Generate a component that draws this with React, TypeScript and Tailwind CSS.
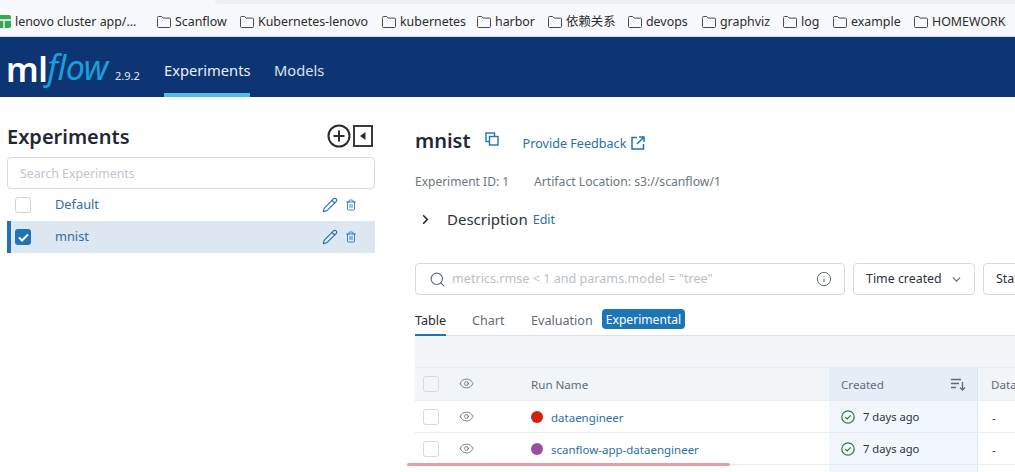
import React from 'react';
import { ChevronDown, ChevronRight, Eye, Info, Pencil, Search, Trash2 } from 'lucide-react';

const bookmarks = [
  { name: 'Scanflow', width: 'w-[83px]' },
  { name: 'Kubernetes-lenovo', width: 'w-[142px]' },
  { name: 'kubernetes', width: 'w-[95px]' },
  { name: 'harbor', width: 'w-[71px]' },
  { name: '依赖关系', width: 'w-[80px]' },
  { name: 'devops', width: 'w-[74px]' },
  { name: 'graphviz', width: 'w-[81px]' },
  { name: 'log', width: 'w-[50px]' },
  { name: 'example', width: 'w-[81px]' },
  { name: 'HOMEWORK', width: 'w-[100px]' },
];

function FolderIcon() {
  return (
    <svg width="16" height="14" viewBox="0 0 16 14" fill="none" stroke="#4b4b4b" strokeWidth="1" className="shrink-0">
      <path d="M1.5 3.5V2.5a1 1 0 0 1 1-1h3.2l1.4 1.6h6.4a1 1 0 0 1 1 1v7.4a1 1 0 0 1-1 1H2.5a1 1 0 0 1-1-1z" />
    </svg>
  );
}

function SheetIcon() {
  return (
    <svg width="11" height="13" viewBox="0 0 11 13" className="shrink-0 mr-[4px]">
      <path d="M0 0h9a2 2 0 0 1 2 2v9a2 2 0 0 1-2 2H0z" fill="#34a853" />
      <path d="M0 5h11M4 5v8" stroke="white" strokeWidth="1.3" fill="none" />
    </svg>
  );
}

function BookmarkBar() {
  return (
    <div className="h-[37px] shrink-0 bg-[#f7f8fc] border-b border-[#d5d9e2]">
      <div className="h-[4px] ml-[215px] bg-[#efeff3] rounded-bl-md" />
      <div className="h-[32px] flex items-center pt-[4px] text-[12.4px] text-[#2b2b2b] whitespace-nowrap">
        <div className="w-[156px] flex items-center shrink-0">
          <SheetIcon />
          <span>lenovo cluster app/...</span>
        </div>
        {bookmarks.map((b) => (
          <div key={b.name} className={`${b.width} flex items-center gap-[3px] shrink-0`}>
            <FolderIcon />
            <span>{b.name}</span>
          </div>
        ))}
      </div>
    </div>
  );
}

function TopNav() {
  return (
    <div className="h-[60px] shrink-0 bg-[#0e3573] flex text-white">
      <div className="w-[164px] flex items-center pl-[6px] pt-[6px] shrink-0">
        <span className="text-[34px] font-semibold leading-none tracking-[-0.5px] mt-[-3px]">ml</span>
        <span className="text-[34px] italic font-normal leading-none text-[#1a9fd8] mt-[-6px] tracking-[-0.5px]">flow</span>
        <span className="text-[11px] ml-[7px] mt-[12px] text-[#e4ebf3]">2.9.2</span>
      </div>
      <div className="w-[86px] h-full flex flex-col shrink-0 text-[14.7px] text-[#e7eef6]">
        <div className="flex-1 flex items-center pt-[10px]">Experiments</div>
        <div className="h-[4px] bg-[#4fbfe8]" />
      </div>
      <div className="ml-[24px] flex items-center pt-[10px] h-[60px] pb-[4px] text-[14.7px] text-[#d8e3ef]">Models</div>
    </div>
  );
}

function ExperimentRow({ name, selected }: { name: string; selected?: boolean }) {
  return (
    <div
      className={`h-[32px] flex items-center pr-[18px] text-[12.8px] text-[#2d6ea8] ${
        selected ? 'bg-[#dce7f2] border-l-[4px] border-[#2272b4] pl-[4px]' : 'pl-[8px]'
      }`}
    >
      {selected ? (
        <div className="w-[16px] h-[16px] rounded-[3px] bg-[#2272b4] flex items-center justify-center">
          <svg width="11" height="9" viewBox="0 0 11 9" fill="none" stroke="white" strokeWidth="2">
            <path d="M1 4.5 L4 7.5 L10 1.5" />
          </svg>
        </div>
      ) : (
        <div className="w-[16px] h-[16px] rounded-[3px] border border-[#ccd3da] bg-white" />
      )}
      <span className="ml-[24px] flex-1">{name}</span>
      <Pencil size={16} strokeWidth={1.7} className="text-[#2272b4]" />
      <Trash2 size={12} strokeWidth={1.7} className="ml-[7px] text-[#2272b4]" />
    </div>
  );
}

function Sidebar() {
  return (
    <div className="w-[375px] shrink-0 pl-[7px] pt-[23px]">
      <div className="h-[36px] flex items-center">
        <span className="flex-1 text-[20px] font-semibold text-[#1f2933] mb-[2px]">Experiments</span>
        <svg width="24" height="24" viewBox="0 0 24 24" fill="none" stroke="#2b2b2b" strokeWidth="2" className="mb-[5px]">
          <circle cx="12" cy="12" r="10.5" />
          <path d="M12 6.5v11M6.5 12h11" />
        </svg>
        <svg width="20" height="22" viewBox="0 0 20 22" className="ml-[2px] mr-[2px] mb-[5px]">
          <rect x="1" y="1" width="18" height="20" fill="none" stroke="#3a3a3a" strokeWidth="2" />
          <path d="M12.5 7v8L7 11z" fill="#2b2b2b" />
        </svg>
      </div>
      <div className="mt-[1px] h-[32px] border border-[#d4dae0] rounded-[4px] flex items-center pl-[12px] pt-[2px] text-[12.3px] text-[#c0c6cd]">
        Search Experiments
      </div>
      <ExperimentRow name="Default" />
      <ExperimentRow name="mnist" selected />
    </div>
  );
}

function CopyIcon() {
  return (
    <svg width="14" height="14" viewBox="0 0 14 14" fill="none" stroke="#2272b4" strokeWidth="1.4">
      <rect x="1" y="1" width="8.5" height="8.5" />
      <rect x="4.5" y="4.5" width="8.5" height="8.5" fill="white" />
    </svg>
  );
}

function ExternalIcon() {
  return (
    <svg width="14" height="14" viewBox="0 0 14 14" fill="none" stroke="#2272b4" strokeWidth="1.5">
      <path d="M6 1.5H1v11.5h11.5V8M8 1h5v5M13 1L6 8" />
    </svg>
  );
}

function Header() {
  return (
    <div>
      <div className="h-[30px] flex items-center">
        <span className="text-[20px] font-semibold text-[#1f2933]">mnist</span>
        <span className="ml-[14px] mb-[4px]">
          <CopyIcon />
        </span>
        <span className="ml-[24px] text-[12.6px] text-[#2d6ea8] mt-[6px]">Provide Feedback</span>
        <span className="ml-[5px] mt-[4px]">
          <ExternalIcon />
        </span>
      </div>
      <div className="mt-[17px] flex text-[12px] text-[#6b7680]">
        <span className="w-[119px]">Experiment ID: 1</span>
        <span className="text-[12.2px]">Artifact Location: s3://scanflow/1</span>
      </div>
      <div className="mt-[16px] h-[24px] flex items-center">
        <ChevronRight size={15} strokeWidth={2.6} className="text-[#1f2933] ml-[3px]" />
        <span className="ml-[14px] text-[15px] text-[#2b333b]">Description</span>
        <span className="ml-[5px] mt-[2px] text-[12.5px] text-[#2d6ea8]">Edit</span>
      </div>
    </div>
  );
}

function Toolbar() {
  return (
    <div className="mt-[32px] flex gap-[8px] whitespace-nowrap">
      <div className="w-[430px] h-[32px] shrink-0 border border-[#d4dae0] rounded-[4px] flex items-center pl-[13px] pr-[12px]">
        <Search size={17} strokeWidth={1.6} className="text-[#5f6b76] shrink-0" />
        <span className="ml-[6px] flex-1 pt-[1px] text-[12.6px] text-[#b9bfc5]">metrics.rmse &lt; 1 and params.model = "tree"</span>
        <Info size={16} strokeWidth={1.5} className="text-[#5f6b76]" />
      </div>
      <div className="w-[122px] h-[32px] shrink-0 border border-[#d4dae0] rounded-[4px] flex items-center pl-[12px] pr-[11px] text-[12.4px] text-[#2b333b]">
        <span className="flex-1 pt-[1px]">Time created</span>
        <ChevronDown size={13} strokeWidth={2.4} className="text-[#5f6b76]" />
      </div>
      <div className="w-[100px] h-[32px] shrink-0 border border-[#d4dae0] rounded-l-[4px] flex items-center pl-[12px] pt-[1px] text-[12.4px] text-[#2b333b]">
        State
      </div>
    </div>
  );
}

function Tabs() {
  return (
    <div className="mt-[13px] h-[28px] flex items-stretch border-b border-[#dbe1e7] text-[12.6px] whitespace-nowrap">
      <div className="w-[31px] mr-[26px] text-[#1f2933] border-b-[2px] border-[#2272b4] mb-[-1px] leading-[25px]">Table</div>
      <div className="w-[33px] mr-[26px] text-[#5f6b76] leading-[25px]">Chart</div>
      <div className="w-[63px] mr-[8px] text-[#5f6b76] leading-[25px]">Evaluation</div>
      <div className="h-[20px] mt-[1px] w-[83px] bg-[#1c76b5] rounded-[4px] text-white text-center text-[12.1px] leading-[21px]">Experimental</div>
    </div>
  );
}

function CheckCircle() {
  return (
    <svg width="14" height="14" viewBox="0 0 14 14" fill="none" stroke="#277c43" strokeWidth="1.2" className="shrink-0">
      <circle cx="7" cy="7" r="6.2" />
      <path d="M4.3 7.2L6.2 9l3.5-3.6" />
    </svg>
  );
}

function SortIcon() {
  return (
    <svg width="15" height="13" viewBox="0 0 15 13" fill="none" stroke="#5f6b76" strokeWidth="1.3">
      <path d="M0 1.5h10M0 5.5h8M0 9.5h5M11.5 4v8M9 9.5l2.5 2.5L14 9.5" />
    </svg>
  );
}

function RunRow({ name, color }: { name: string; color: string }) {
  return (
    <div className="h-[32px] flex border-b border-[#e8ecf0] text-[11.5px] whitespace-nowrap">
      <div className="w-[8px] shrink-0" />
      <div className="w-[16px] h-[16px] mt-[8px] rounded-[3px] border border-[#d4dae0] bg-white shrink-0" />
      <div className="w-[36px] shrink-0 flex pl-[20px] pt-[8px]">
        <Eye size={15} strokeWidth={1.4} className="text-[#5f6b76]" />
      </div>
      <div className="w-[354px] shrink-0 pl-[56px] flex items-center pt-[1px]">
        <span className="w-[12px] h-[12px] rounded-full shrink-0" style={{ backgroundColor: color }} />
        <span className="ml-[8px] text-[#2d6ea8]">{name}</span>
      </div>
      <div className="w-[149px] shrink-0 bg-[#f1f7fc] border-r border-[#dbe6f0] flex items-center pl-[12px] gap-[8px] text-[#2b333b] pt-[1px]">
        <CheckCircle />
        <span className="text-[11.2px]">7 days ago</span>
      </div>
      <div className="pl-[14px] flex items-center text-[#2b333b] pt-[1px]">-</div>
    </div>
  );
}

function RunsTable() {
  return (
    <div className="relative">
      <div className="h-[32px] bg-[#f2f5f8] border-b border-[#e8ecf0]" />
      <div className="h-[33px] flex bg-[#f2f5f8] border-b border-[#e8ecf0] text-[11.6px] text-[#5f6b76] whitespace-nowrap">
        <div className="w-[8px] shrink-0" />
        <div className="w-[16px] h-[16px] mt-[8px] rounded-[3px] border border-[#d4dae0] bg-[#f2f5f8] shrink-0" />
        <div className="w-[36px] shrink-0 flex pl-[20px] pt-[8px]">
          <Eye size={15} strokeWidth={1.4} />
        </div>
        <div className="w-[354px] shrink-0 pl-[56px] flex items-center">Run Name</div>
        <div className="w-[149px] shrink-0 bg-[#e4eef7] border-r border-[#dbe6f0] flex items-center pl-[12px] pr-[11px]">
          <span className="flex-1">Created</span>
          <SortIcon />
        </div>
        <div className="pl-[13px] flex items-center">Data</div>
      </div>
      <RunRow name="dataengineer" color="#d3210f" />
      <RunRow name="scanflow-app-dataengineer" color="#984ea3" />
      <div className="h-[8px] flex">
        <div className="w-[414px] shrink-0" />
        <div className="w-[149px] bg-[#f1f7fc] border-r border-[#dbe6f0]" />
      </div>
      {/* red scribble from the person who took the screenshot */}
      <div className="absolute left-[-8px] top-[127px] w-[323px] h-[3px] bg-[#e8868c] opacity-80 rounded-full blur-[0.6px]" />
    </div>
  );
}

export default function App() {
  return (
    <div className="w-[1015px] h-[472px] overflow-hidden bg-white flex flex-col font-['Noto_Sans','Noto_Sans_CJK_SC',sans-serif]">
      <BookmarkBar />
      <TopNav />
      <div className="flex-1 flex min-h-0">
        <Sidebar />
        <div className="flex-1 min-w-0 pl-[40px] pt-[29px] overflow-hidden">
          <Header />
          <Toolbar />
          <Tabs />
          <RunsTable />
        </div>
      </div>
    </div>
  );
}
